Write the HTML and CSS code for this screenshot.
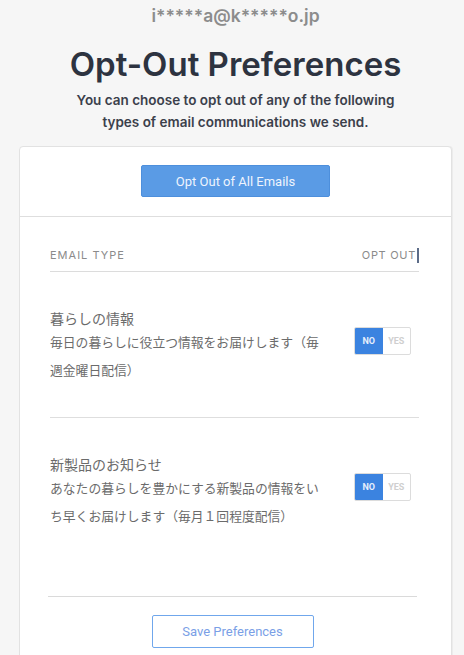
FILE: index.html
```html
<!DOCTYPE html>
<html lang="ja">
<head>
<meta charset="utf-8">
<title>Opt-Out Preferences</title>
<link rel="stylesheet" href="styles.css">
</head>
<body>
<main class="page">
  <header class="intro">
    <div class="email">i*****a@k*****o.jp</div>
    <h1 class="title">Opt-Out Preferences</h1>
    <p class="lead">You can choose to opt out of any of the following<br>types of email communications we send.</p>
  </header>
  <section class="card">
    <div class="card-top">
      <button class="btn-all" type="button">Opt Out of All Emails</button>
    </div>
    <div class="table">
      <div class="table-head">
        <span class="th">EMAIL TYPE</span>
        <span class="th th-right">OPT OUT<span class="caret"></span></span>
      </div>
      <div class="row">
        <div class="row-text">
          <div class="row-title">暮らしの情報</div>
          <div class="row-desc">毎日の暮らしに役立つ情報をお届けします（毎週金曜日配信）</div>
        </div>
        <div class="toggle">
          <span class="opt opt-on">NO</span>
          <span class="opt">YES</span>
        </div>
      </div>
      <div class="row row-last">
        <div class="row-text">
          <div class="row-title">新製品のお知らせ</div>
          <div class="row-desc">あなたの暮らしを豊かにする新製品の情報をいち早くお届けします（毎月１回程度配信）</div>
        </div>
        <div class="toggle">
          <span class="opt opt-on">NO</span>
          <span class="opt">YES</span>
        </div>
      </div>
    </div>
    <div class="card-foot">
      <button class="btn-save" type="button">Save Preferences</button>
    </div>
  </section>
</main>
</body>
</html>
```

FILE: styles.css
```css
* { box-sizing: border-box; }
html, body { margin: 0; padding: 0; }
body {
  background: #f6f6f6;
  font-family: Inter, "Noto Sans", sans-serif;
  overflow: hidden;
}
.page {
  width: 433px;
  margin-left: 19px;
}
.intro {
  text-align: center;
}
.email {
  padding-top: 4px;
  font-size: 17.5px;
  line-height: 24px;
  font-weight: 600;
  color: #8c8c8c;
}
.title {
  margin: 16px 0 0;
  font-size: 33px;
  line-height: 40px;
  font-weight: 600;
  color: #2d3340;
}
.lead {
  margin: 5px 0 0;
  font-size: 13.5px;
  line-height: 22px;
  font-weight: 600;
  color: #3b404b;
}
.card {
  margin-top: 13px;
  background: #fff;
  border: 1px solid #e2e2e2;
  border-radius: 4px;
  box-shadow: 1px 0 0 #ececec;
  height: 540px;
}
.card-top {
  display: flex;
  justify-content: center;
  padding: 18px 0 19px;
  border-bottom: 1px solid #dedede;
}
.btn-all {
  width: 189px;
  height: 32px;
  background: #5a9be5;
  border: 1px solid #4d8fdc;
  border-radius: 2px;
  color: #eef4fd;
  font-family: Roboto, sans-serif;
  font-size: 13px;
  padding: 0;
}
.table {
  padding: 28px 32px 0 30px;
}
.table-head {
  display: flex;
  justify-content: space-between;
  align-items: center;
  height: 20px;
  padding-bottom: 6px;
  border-bottom: 1px solid #dcdcdc;
  box-sizing: content-box;
}
.th {
  font-size: 11px;
  letter-spacing: 1px;
  color: #8b8b8b;
  line-height: 20px;
}
.th-right {
  display: flex;
  align-items: center;
  letter-spacing: 0.7px;
}
.caret {
  display: inline-block;
  width: 2px;
  height: 15px;
  margin-left: 1px;
  background: #5c6c88;
}
.row {
  display: flex;
  justify-content: space-between;
  align-items: flex-start;
  padding: 36px 8px 33px 0;
  border-bottom: 1px solid #dedede;
}
.row-last {
  border-bottom: none;
}
.row-text {
  width: 272px;
  font-family: "Noto Sans CJK JP", sans-serif;
  color: #6b6b6b;
}
.row-title {
  font-size: 14px;
  line-height: 20px;
}
.row-desc {
  font-size: 12.8px;
  line-height: 28px;
}
.toggle {
  display: flex;
  width: 57px;
  height: 28px;
  margin-top: 19px;
  border: 1px solid #dcdcdc;
  border-radius: 2px;
  overflow: hidden;
  background: #fff;
}
.opt {
  flex: 1;
  display: flex;
  align-items: center;
  justify-content: center;
  font-family: Roboto, sans-serif;
  font-size: 9px;
  font-weight: 700;
  color: #cfcfcf;
}
.opt-on {
  background: #3b83e0;
  color: #e6effc;
}
.card-foot {
  margin: 33px 34px 0 28px;
  padding-top: 18px;
  border-top: 1px solid #dadada;
  display: flex;
  justify-content: center;
}
.btn-save {
  width: 162px;
  height: 33px;
  background: #fff;
  border: 1.5px solid #70a7ec;
  border-radius: 2px;
  color: #7a9fe6;
  font-family: Roboto, sans-serif;
  font-size: 13px;
  padding: 0;
}
```
